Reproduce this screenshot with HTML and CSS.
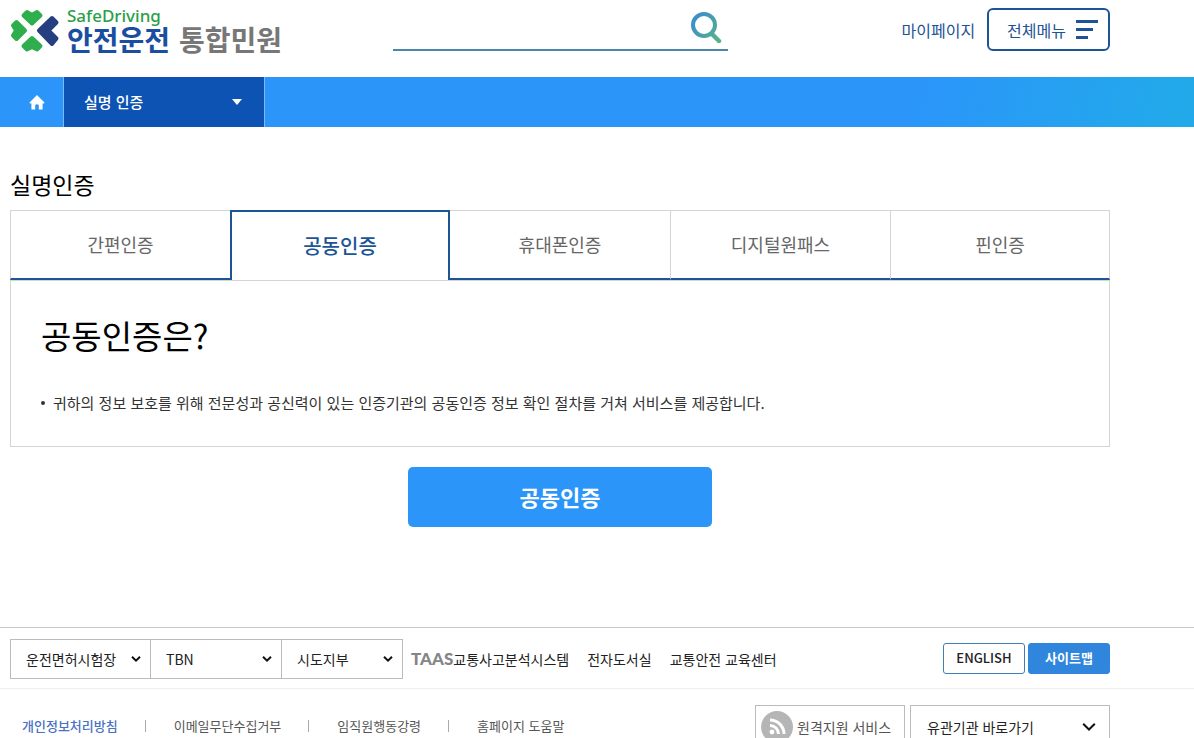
FILE: index.html
```html
<!DOCTYPE html>
<html lang="ko">
<head>
<meta charset="utf-8">
<title>안전운전 통합민원 - 실명인증</title>
<meta name="viewport" content="width=device-width, initial-scale=1">
<link rel="stylesheet" href="styles.css">
</head>
<body>
<header class="header container">
  <a class="logo" href="#">
    <svg class="logo-mark" viewBox="0 0 50 46" aria-hidden="true">
      <g fill="#2fae4e" stroke="#2fae4e" stroke-width="4" stroke-linejoin="round">
        <path d="M13.5 7.5 L17 4 L22 7 L27 4 L30.5 7.5 L22 15.5 Z"/>
        <path d="M6.5 14 L15 22.5 L6.5 31 L3 27.5 L6 22.5 L3 17.5 Z"/>
        <path d="M22 30 L30.5 38 L27 41.5 L22 39 L17 41.5 L13.5 38 Z"/>
      </g>
      <path fill="#263f80" stroke="#263f80" stroke-width="4" stroke-linejoin="round" d="M29 22.5 L42 10 L46.5 14.5 L38.5 22.5 L46.5 30.5 L42 36 Z"/>
    </svg>
    <span class="logo-text">
      <span class="logo-en">SafeDriving</span>
      <span class="logo-ko"><strong class="logo-name">안전운전</strong><strong class="logo-sub">통합민원</strong></span>
    </span>
  </a>
  <form class="search">
    <input class="search-input" type="search" aria-label="검색">
    <button class="search-button" type="submit" aria-label="검색">
      <svg width="32" height="32" viewBox="0 0 32 32" fill="none" stroke="url(#lens)" aria-hidden="true">
        <defs><linearGradient id="lens" gradientUnits="userSpaceOnUse" x1="4" y1="8" x2="30" y2="28"><stop offset="0" stop-color="#3b8fc9"/><stop offset="1" stop-color="#57b387"/></linearGradient></defs>
        <circle cx="14" cy="14" r="11" stroke-width="4"/>
        <path d="M22 23 L29 30" stroke-width="4.5" stroke-linecap="round"/>
      </svg>
    </button>
  </form>
  <div class="user-menu">
    <a class="my-page" href="#">마이페이지</a>
    <button class="all-menu" type="button">전체메뉴
      <svg width="22" height="19" viewBox="0 0 22 19" fill="#1d5495" aria-hidden="true"><path d="M0 0h22v3H0zM0 8h17v3H0zM0 16h12v3H0z"/></svg>
    </button>
  </div>
</header>

<nav class="crumbs" aria-label="현재 위치">
  <a class="crumb-home" href="#" aria-label="홈">
    <svg width="16" height="15" viewBox="0 0 16 15" fill="#fff" aria-hidden="true"><path d="M8 0 L15.5 7.6 L15 8.6 H13.6 V14 Q13.6 14.5 13 14.5 H9.8 V10 Q8 8.4 6.2 10 V14.5 H3 Q2.4 14.5 2.4 14 V8.6 H1 L.5 7.6 Z"/></svg>
  </a>
  <button class="crumb-current" type="button">실명 인증
    <svg width="10" height="6" viewBox="0 0 10 6" fill="#fff" aria-hidden="true"><path d="M0 0 H10 L5 6 Z"/></svg>
  </button>
</nav>

<main class="container main">
  <h1 class="page-title">실명인증</h1>
  <div class="tabs" role="tablist">
    <button class="tab" type="button" role="tab">간편인증</button>
    <button class="tab tab-active" type="button" role="tab" aria-selected="true">공동인증</button>
    <button class="tab" type="button" role="tab">휴대폰인증</button>
    <button class="tab" type="button" role="tab">디지털원패스</button>
    <button class="tab" type="button" role="tab">핀인증</button>
  </div>
  <section class="panel">
    <h2 class="panel-title">공동인증은?</h2>
    <ul class="panel-list">
      <li>귀하의 정보 보호를 위해 전문성과 공신력이 있는 인증기관의 공동인증 정보 확인 절차를 거쳐 서비스를 제공합니다.</li>
    </ul>
  </section>
  <button class="cta" type="button">공동인증</button>
</main>

<footer class="footer">
  <div class="footer-row container">
    <div class="selects">
      <div class="select select-exam">
        <select aria-label="운전면허시험장"><option>운전면허시험장</option></select>
        <svg width="10" height="7" viewBox="0 0 10 7" aria-hidden="true"><path d="M1 1.2 L5 5.2 L9 1.2"/></svg>
      </div>
      <div class="select select-tbn">
        <select aria-label="TBN"><option>TBN</option></select>
        <svg width="10" height="7" viewBox="0 0 10 7" aria-hidden="true"><path d="M1 1.2 L5 5.2 L9 1.2"/></svg>
      </div>
      <div class="select select-branch">
        <select aria-label="시도지부"><option>시도지부</option></select>
        <svg width="10" height="7" viewBox="0 0 10 7" aria-hidden="true"><path d="M1 1.2 L5 5.2 L9 1.2"/></svg>
      </div>
    </div>
    <div class="sites">
      <a href="#"><span class="taas">TAAS</span>교통사고분석시스템</a>
      <a href="#">전자도서실</a>
      <a href="#">교통안전 교육센터</a>
    </div>
    <div class="footer-buttons">
      <a class="pill" href="#">ENGLISH</a>
      <a class="pill pill-filled" href="#">사이트맵</a>
    </div>
  </div>
  <div class="footer-bottom">
    <div class="footer-policy container">
      <ul class="policies">
        <li><a class="privacy" href="#">개인정보처리방침</a></li>
        <li><a href="#">이메일무단수집거부</a></li>
        <li><a href="#">임직원행동강령</a></li>
        <li><a href="#">홈페이지 도움말</a></li>
      </ul>
      <a class="remote" href="#">
        <svg width="32" height="32" viewBox="0 0 32 32" fill="none" stroke="#fff" aria-hidden="true">
          <circle cx="16" cy="16" r="16" fill="#b5b5b5" stroke="none"/>
          <circle cx="11" cy="21" r="2.4" fill="#fff" stroke="none"/>
          <path stroke-width="3" d="M9 14.5 A8.5 8.5 0 0 1 17.5 23 M9 9 A14 14 0 0 1 23 23"/>
        </svg>
        원격지원 서비스
      </a>
      <div class="select select-family">
        <select aria-label="유관기관 바로가기"><option>유관기관 바로가기</option></select>
        <svg width="14" height="9" viewBox="0 0 14 9" aria-hidden="true"><path d="M1.2 1.2 L7 7 L12.8 1.2"/></svg>
      </div>
    </div>
  </div>
</footer>
</body>
</html>
```
FILE: styles.css
```css
* { box-sizing: border-box; }
html { scrollbar-width: none; }
body {
  margin: 0;
  background: #fff;
  color: #333;
  font-family: "Noto Sans CJK KR", sans-serif;
  font-size: 14px;
  line-height: 20px;
}
a { color: inherit; text-decoration: none; }
button, input, select { font: inherit; color: inherit; }
button { padding: 0; border: 0; background: none; cursor: pointer; }
svg { display: block; flex: none; }
.container { max-width: 1120px; padding: 0 10px; }

/* header */
.header { display: flex; align-items: flex-start; padding-top: 8px; height: 77px; }
.logo { display: flex; align-items: flex-start; gap: 7px; white-space: nowrap; }
.logo-mark { width: 50px; height: 46px; }
.logo-text { display: flex; flex-direction: column; }
.logo-en {
  color: #2a9f48;
  font-family: "Noto Sans", sans-serif;
  font-size: 17px;
  font-weight: 500;
  line-height: 16px;
}
.logo-ko { display: flex; gap: 9px; font-size: 28px; line-height: 30px; }
.logo-name { color: #1b4da0; }
.logo-sub { color: #777; }
.search {
  display: flex;
  align-items: flex-start;
  width: 335px;
  height: 43px;
  margin-left: 111px;
  border-bottom: 2px solid #4a87ad;
}
.search-input { flex: 1; min-width: 0; height: 40px; border: 0; outline: 0; background: none; }
.search-button { margin: 3px 6px 0 0; }
.user-menu { display: flex; align-items: center; gap: 12px; margin-left: auto; color: #1d5495; font-size: 16px; }
.all-menu {
  display: flex;
  align-items: center;
  gap: 10px;
  height: 43px;
  padding: 0 10px 0 18px;
  border: 2px solid #1d5495;
  border-radius: 6px;
}

/* location bar */
.crumbs { display: flex; height: 50px; background: linear-gradient(100deg, #2b95fa 76%, #22a9ea 98%); }
.crumb-home {
  display: flex;
  align-items: center;
  justify-content: flex-end;
  width: 64px;
  padding-right: 18px;
  border-right: 1px solid #7bbcf8;
}
.crumb-current {
  display: flex;
  align-items: center;
  justify-content: space-between;
  width: 201px;
  padding: 0 22px 0 20px;
  border-right: 1px solid #7bbcf8;
  background: #0d53b3;
  color: #fff;
  font-size: 15px;
  font-weight: 500;
}

/* main */
.main { padding-top: 41px; }
.page-title { margin: 0 0 10px; color: #000; font-size: 23px; font-weight: 400; line-height: 32px; }
.tabs { display: grid; grid-template-columns: repeat(5, 1fr); }
.tab {
  height: 70px;
  padding-bottom: 2px;
  border: 1px solid #d5d5d5;
  border-right: 0;
  border-bottom: 2px solid #1d5495;
  color: #666;
  font-size: 18px;
}
.tab:last-child { border-right: 1px solid #d5d5d5; }
.tab-active {
  padding: 0;
  border: 2px solid #1d5495;
  border-bottom: 0;
  color: #1d5495;
  font-size: 20px;
  font-weight: 500;
}
.tab-active + .tab { border-left: 0; }
.panel { padding: 29px 30px 33px; border: 1px solid #d5d5d5; }
.panel-title { margin: 0 0 32px; color: #000; font-size: 33px; font-weight: 400; line-height: 50px; }
.panel-list { margin: 0; padding: 0; list-style: none; font-size: 15px; line-height: 21px; }
.panel-list li { display: flex; align-items: center; gap: 8px; }
.panel-list li::before { content: ""; flex: none; width: 4px; height: 4px; border-radius: 50%; background: #333; }
.cta {
  display: block;
  width: 304px;
  height: 60px;
  margin: 20px auto 0;
  padding-bottom: 2px;
  border-radius: 5px;
  background: #2b95fa;
  color: #fff;
  font-size: 22px;
  font-weight: 700;
}

/* footer */
.footer { margin-top: 100px; border-top: 1px solid #c8c8c8; }
.footer-row { display: flex; align-items: center; height: 60px; padding-top: 2px; color: #222; }
.selects { display: flex; }
.select { position: relative; height: 40px; border: 1px solid #bbb; }
.select + .select { border-left: 0; }
.select select {
  width: 100%;
  height: 100%;
  padding: 0 15px;
  border: 0;
  outline: 0;
  appearance: none;
  background: none;
  color: #222;
}
.select svg {
  position: absolute;
  top: 50%;
  right: 9px;
  transform: translateY(-50%);
  fill: none;
  stroke: #111;
  stroke-width: 2;
  pointer-events: none;
}
.select-exam { width: 141px; }
.select-tbn { width: 131px; }
.select-branch { width: 121px; }
.sites { display: flex; gap: 18px; margin-left: 8px; }
.sites a { display: flex; align-items: center; white-space: nowrap; }
.taas { color: #858585; font-family: Lato, sans-serif; font-size: 17px; font-weight: 900; }
.footer-buttons { display: flex; gap: 3px; margin-left: auto; padding-bottom: 2px; }
.pill {
  display: flex;
  align-items: center;
  justify-content: center;
  width: 82px;
  height: 31px;
  border: 1px solid #3f7fb5;
  border-radius: 3px;
  font-size: 13px;
  font-weight: 500;
}
.pill-filled { border-color: #2f86dc; background: #2f86dc; color: #fff; font-weight: 700; }
.footer-bottom { border-top: 1px solid #eee; }
.footer-policy { display: flex; align-items: flex-start; padding-top: 16px; }
.policies {
  display: flex;
  margin: 0 auto 0 12px;
  padding: 11px 0;
  list-style: none;
  color: #555;
  font-size: 13px;
  white-space: nowrap;
}
.policies li { display: flex; align-items: center; }
.policies li + li::before { content: ""; width: 1px; height: 12px; margin: 0 28px 0 27px; background: #aaa; }
.privacy { color: #4a72c4; font-weight: 500; }
.remote {
  display: flex;
  align-items: center;
  gap: 4px;
  width: 150px;
  height: 44px;
  padding-left: 5px;
  margin-right: 5px;
  border: 1px solid #bbb;
  color: #555;
  white-space: nowrap;
}
.select-family { width: 200px; height: 44px; }
.select.select-family { border-left: 1px solid #bbb; }
.select-family select { padding-left: 16px; }
.select-family svg { right: 13px; }
```
